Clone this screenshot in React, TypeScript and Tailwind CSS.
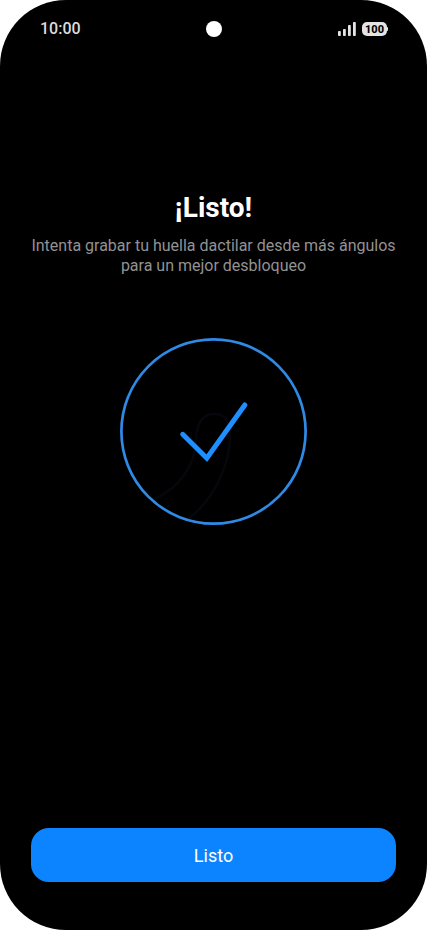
import React from 'react';

const SIGNAL_BARS = [
  { x: 0, height: 5 },
  { x: 5, height: 7 },
  { x: 10, height: 11 },
  { x: 15, height: 14 },
];

const SignalIcon: React.FC = () => (
  <svg width="18" height="14" viewBox="0 0 18 14" fill="#e4e4e4" aria-hidden="true">
    {SIGNAL_BARS.map((bar) => (
      <rect key={bar.x} x={bar.x} y={14 - bar.height} width="2.8" height={bar.height} rx="0.8" />
    ))}
  </svg>
);

const BatteryBadge: React.FC<{ level: number }> = ({ level }) => (
  <div className="flex items-center">
    <span className="flex h-[14px] w-[25px] items-center justify-center rounded-[5px] bg-[#e4e4e4] text-[11px] leading-none font-extrabold text-black">
      {level}
    </span>
    <span className="h-1 w-px rounded-r-sm bg-[#e4e4e4]" />
  </div>
);

const StatusBar: React.FC = () => (
  <header className="grid grid-cols-3 items-center pt-[19px] pr-[39px] pl-10">
    <span className="text-base leading-5 font-medium text-[#dcdcdc]">10:00</span>
    <span className="size-4 justify-self-center rounded-full bg-white" />
    <div className="flex items-center gap-1.5 justify-self-end">
      <SignalIcon />
      <BatteryBadge level={100} />
    </div>
  </header>
);

const SuccessMark: React.FC = () => (
  <svg width="187" height="187" viewBox="0 0 187 187" fill="none" aria-hidden="true">
    {/* faint fingertip behind the check */}
    <path
      d="M34 161C58 151 75 128 76 104C76 92 78 77 93 76C108 75 111 88 110 98C110 128 92 164 68 181"
      stroke="#06070c"
      strokeWidth="2.5"
    />
    <circle cx="93.5" cy="93.5" r="92.1" stroke="#2f8ae6" strokeWidth="2.7" />
    <path
      d="M62.7 96.3L86.8 120.2L124.8 67"
      stroke="#1f8fff"
      strokeWidth="5"
      strokeLinecap="round"
      strokeLinejoin="miter"
    />
  </svg>
);

const App: React.FC = () => {
  return (
    <div className="min-h-screen bg-white font-[Roboto,sans-serif]">
      <div className="flex min-h-screen flex-col rounded-[66px] bg-black">
        <StatusBar />

        <main className="flex flex-1 flex-col items-center px-5 pt-[151px]">
          <h1 className="text-[28px] leading-9 font-bold text-white">¡Listo!</h1>
          <p className="mt-2.5 max-w-96 text-center text-base leading-5 text-[#929292]">
            Intenta grabar tu huella dactilar desde más ángulos para un mejor desbloqueo
          </p>
          <div className="mt-[62px]">
            <SuccessMark />
          </div>
        </main>

        <footer className="px-[31px] pb-12">
          <button
            type="button"
            className="h-[54px] w-full rounded-[18px] bg-[#0d84ff] pt-0.5 text-lg text-white"
          >
            Listo
          </button>
        </footer>
      </div>
    </div>
  );
};

export default App;
